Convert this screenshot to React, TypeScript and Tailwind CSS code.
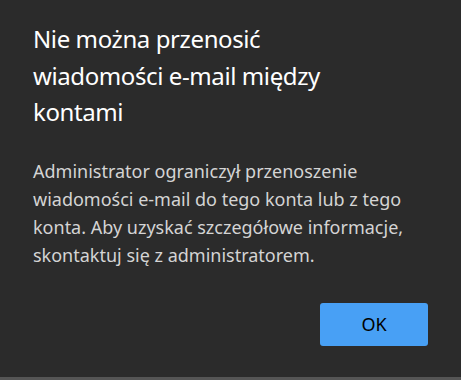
import React from "react";

export default function App() {
  return (
    <div className="w-[461px] h-[380px] bg-[#2b2b2b] flex flex-col" style={{ fontFamily: '"Noto Sans", "Open Sans", sans-serif' }}>
      <div className="flex-1 flex flex-col px-[33px] pt-[21px]">
        <h1 className="text-[24px] leading-[36.5px] tracking-[-0.4px] text-white font-normal">
          Nie można przenosić
          <br />
          wiadomości e-mail między
          <br />
          kontami
        </h1>
        <p className="mt-[26px] text-[18px] leading-[28.3px] text-[#d4d4d4]">
          Administrator ograniczył przenoszenie
          <br />
          wiadomości e-mail do tego konta lub z tego
          <br />
          konta. Aby uzyskać szczegółowe informacje,
          <br />
          skontaktuj się z administratorem.
        </p>
        <div className="flex justify-end mt-[33px]">
          <button className="w-[108px] h-[43px] rounded-[3px] bg-[#48a0f5] text-black text-[18px]">OK</button>
        </div>
      </div>
      <div className="h-[3px] bg-[#555555]" />
    </div>
  );
}
